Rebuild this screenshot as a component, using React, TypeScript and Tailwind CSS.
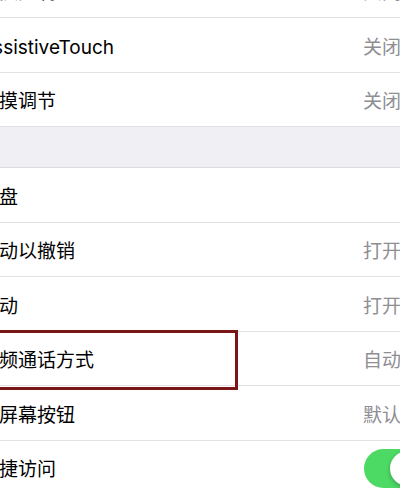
import React from 'react';

type Row = { label: string; value?: string; toggle?: boolean; marked?: boolean };

const groupA: Row[] = [
  { label: '切换控制', value: '关闭' },
  { label: 'AssistiveTouch', value: '关闭' },
  { label: '触摸调节', value: '关闭' },
];

const groupB: Row[] = [
  { label: '键盘' },
  { label: '摇动以撤销', value: '打开' },
  { label: '振动', value: '打开' },
  { label: '音频通话方式', value: '自动', marked: true },
  { label: '主屏幕按钮', value: '默认' },
  { label: '便捷访问', toggle: true },
];

const SettingRow: React.FC<{ row: Row }> = ({ row }) => (
  <div
    className={`relative flex items-center justify-between h-[54.5px] bg-white border-b border-[#e2e2e6] ${
      row.toggle ? 'pr-[13px]' : 'pr-[39px]'
    }`}
  >
    <span className="pt-[5px] text-[19px] text-black leading-none">{row.label}</span>
    {row.value && <span className="pt-[5px] text-[19px] text-[#8e8e93] leading-none">{row.value}</span>}
    {row.toggle && (
      <div className="relative w-[63px] h-[39px] mt-[2px] rounded-full bg-[#4cd964]">
        <div className="absolute right-[2px] top-[2px] w-[35px] h-[35px] rounded-full bg-white shadow-[0_2px_4px_rgba(0,0,0,0.25)]" />
      </div>
    )}
    {row.marked && (
      <div className="absolute z-10 left-[-10px] top-[-2px] w-[268px] h-[60px] border-[3px] border-[#7b1616]" />
    )}
  </div>
);

export default function App() {
  return (
    <div
      className="w-[400px] h-[489px] overflow-hidden bg-[#efeff4]"
      style={{ fontFamily: '"Inter", "Noto Sans CJK SC", sans-serif' }}
    >
      <div className="w-[460px] -ml-[20px] -mt-[36.5px]">
        {groupA.map((r, i) => (
          <SettingRow key={r.label} row={r} />
        ))}
        <div className="h-[41px] bg-[#efeff4] border-b border-[#dcdce0]" />
        {groupB.map((r) => (
          <SettingRow key={r.label} row={r} />
        ))}
      </div>
    </div>
  );
}
